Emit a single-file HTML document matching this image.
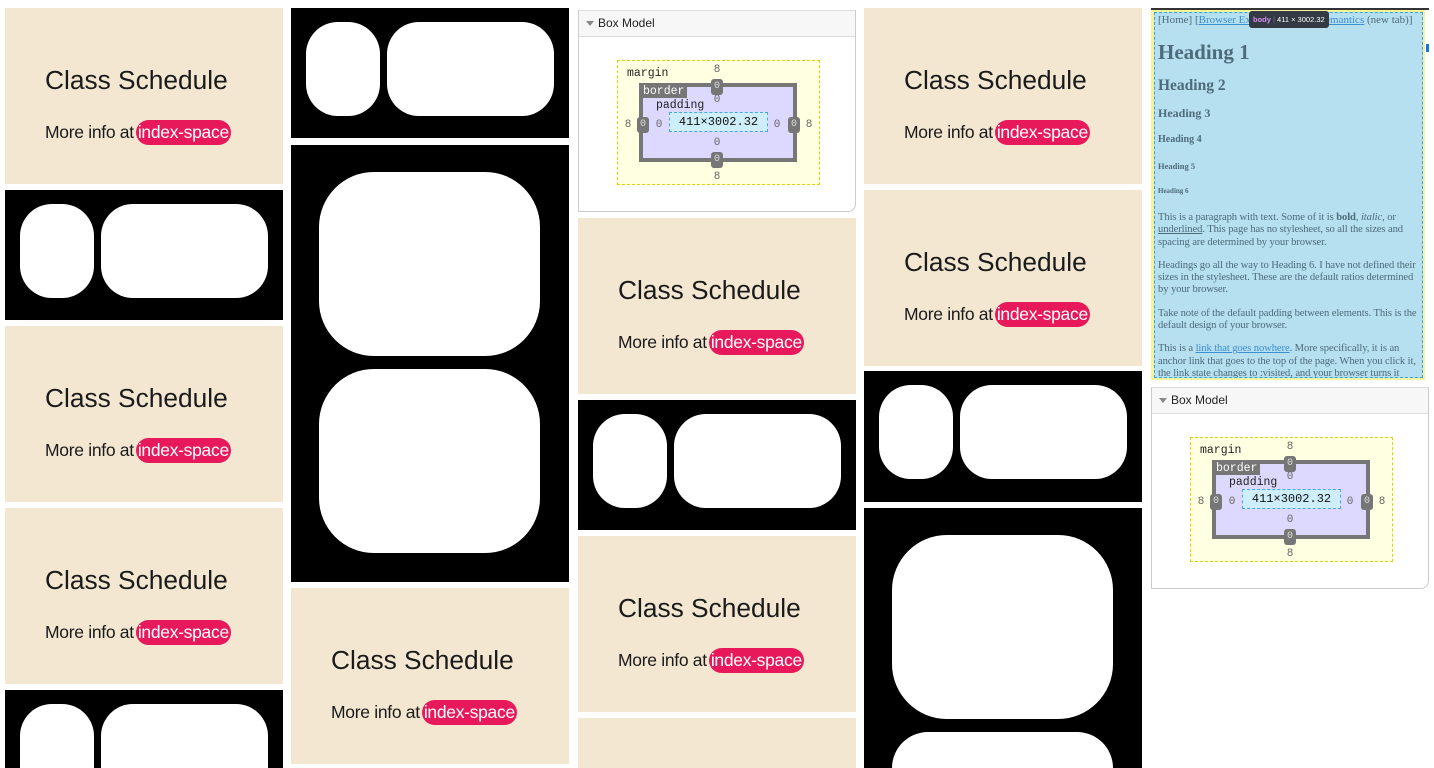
<!DOCTYPE html>
<html><head><meta charset="utf-8"><style>
*{margin:0;padding:0;box-sizing:border-box}
html,body{width:1434px;height:768px;overflow:hidden}
body{background:#fff;position:relative;font-family:"Liberation Sans",sans-serif}
.a{position:absolute}
.card{position:absolute;width:278px;height:176px;background:#f3e7d2;overflow:hidden}
.card .t{position:absolute;left:40px;top:57px;font-size:26.3px;color:#1a1a1a;white-space:nowrap}
.card .m{position:absolute;left:40px;top:112px;font-size:17.5px;color:#1a1a1a;white-space:nowrap;line-height:25px;letter-spacing:-0.3px}
.card .p{display:inline-block;background:#e8195a;color:#fff;border-radius:13px;padding:0 2px;height:25px;line-height:24px;margin-left:2px}
.blk{position:absolute;width:278px;background:#000;overflow:hidden}
.w{position:absolute;background:#fff}
.bm{position:absolute;width:278px;height:202px;background:#fff;border:1px solid #ccc;border-top-color:#ddd;border-radius:0 0 8px 0;overflow:hidden;font-family:"Liberation Mono","DejaVu Sans Mono",monospace}
.bm .h{position:absolute;left:0;top:0;width:100%;height:26px;background:#f7f7f7;border-bottom:1px solid #ddd;font-family:"Liberation Sans",sans-serif;font-size:12px;line-height:25px;padding-left:19px;color:#222}
.bm .h:before{content:"";position:absolute;left:7px;top:10px;border-left:4px solid transparent;border-right:4px solid transparent;border-top:5px solid #888}
.bm .mg{position:absolute;left:38px;top:49px;width:203px;height:125px;background:#ffffe1;border:1px dashed #d8d800}
.bm .bd{position:absolute;left:60px;top:72px;width:158px;height:79px;background:#ddd8fd;border:4px solid #767676}
.bm .ct{position:absolute;left:90px;top:101px;width:99px;height:20px;background:#cdeefa;border:1px dashed #4aa3f0;font-size:12px;text-align:center;line-height:18px;color:#111}
.bm .n{position:absolute;width:20px;margin-left:-10px;text-align:center;font-size:11px;line-height:12px;margin-top:-6px;color:#666}
.bm .b{position:absolute;width:12px;height:16px;margin-left:-6px;margin-top:-8px;background:#767676;border-radius:3px;color:#ddd;font-size:10px;text-align:center;line-height:16px}
.bm .lb{position:absolute;font-size:11.5px;color:#222}
.sc{position:absolute;left:1151px;top:8px;width:278px;height:372px;overflow:hidden;background:#fff}
.sc .in{position:absolute;left:0;top:2px;width:274px;height:370px;background:#f2f39a}
.sc .bl{position:absolute;left:3px;top:4px;width:269px;height:366px;background:#b6dff0;border:1px dashed #3aa0e0;font-family:"Liberation Serif",serif;color:#4e6b7a;padding:1px 0 0 3px;overflow:hidden}
.sc p{font-size:10.6px;line-height:12.3px;margin-bottom:11px;letter-spacing:-0.1px}
.sc a{color:#3c8fd0}
</style></head><body>

<!-- column 1 -->
<div class="card" style="left:5px;top:8px"><div class="t">Class Schedule</div><div class="m">More info at<span class="p">index-space</span></div></div>
<div class="blk" style="left:5px;top:190px;height:130px"><div class="w" style="left:15px;top:14px;width:74px;height:94px;border-radius:32px"></div><div class="w" style="left:96px;top:14px;width:167px;height:94px;border-radius:32px"></div></div>
<div class="card" style="left:5px;top:326px"><div class="t">Class Schedule</div><div class="m">More info at<span class="p">index-space</span></div></div>
<div class="card" style="left:5px;top:508px"><div class="t">Class Schedule</div><div class="m">More info at<span class="p">index-space</span></div></div>
<div class="blk" style="left:5px;top:690px;height:78px"><div class="w" style="left:15px;top:14px;width:74px;height:94px;border-radius:32px"></div><div class="w" style="left:96px;top:14px;width:167px;height:94px;border-radius:32px"></div></div>

<!-- column 2 -->
<div class="blk" style="left:291px;top:8px;height:130px"><div class="w" style="left:15px;top:14px;width:74px;height:94px;border-radius:32px"></div><div class="w" style="left:96px;top:14px;width:167px;height:94px;border-radius:32px"></div></div>
<div class="blk" style="left:291px;top:145px;height:437px"><div class="w" style="left:28px;top:27px;width:221px;height:184px;border-radius:55px"></div><div class="w" style="left:28px;top:224px;width:221px;height:184px;border-radius:55px"></div></div>
<div class="card" style="left:291px;top:588px"><div class="t">Class Schedule</div><div class="m">More info at<span class="p">index-space</span></div></div>

<!-- column 3 -->
<div class="bm" style="left:578px;top:10px">
<div class="h">Box Model</div>
<div class="mg"></div><div class="bd"></div>
<div class="lb" style="left:61px;top:74px;background:#767676;color:#fff;padding:0 3px;line-height:13px">border</div>
<div class="lb" style="left:48px;top:56px">margin</div>
<div class="lb" style="left:77px;top:88px">padding</div>
<div class="ct">411×3002.32</div>
<div class="n" style="left:138px;top:59px">8</div>
<div class="b" style="left:138px;top:76px">0</div>
<div class="n" style="left:138px;top:89px">0</div>
<div class="n" style="left:49px;top:114px">8</div>
<div class="b" style="left:64px;top:114px">0</div>
<div class="n" style="left:80px;top:114px">0</div>
<div class="n" style="left:198px;top:114px">0</div>
<div class="b" style="left:215px;top:114px">0</div>
<div class="n" style="left:230px;top:114px">8</div>
<div class="n" style="left:138px;top:132px">0</div>
<div class="b" style="left:138px;top:149px">0</div>
<div class="n" style="left:138px;top:166px">8</div>
</div>
<div class="card" style="left:578px;top:218px"><div class="t">Class Schedule</div><div class="m">More info at<span class="p">index-space</span></div></div>
<div class="blk" style="left:578px;top:400px;height:130px"><div class="w" style="left:15px;top:14px;width:74px;height:94px;border-radius:32px"></div><div class="w" style="left:96px;top:14px;width:167px;height:94px;border-radius:32px"></div></div>
<div class="card" style="left:578px;top:536px"><div class="t">Class Schedule</div><div class="m">More info at<span class="p">index-space</span></div></div>
<div class="card" style="left:578px;top:718px;height:50px"></div>

<!-- column 4 -->
<div class="card" style="left:864px;top:8px"><div class="t">Class Schedule</div><div class="m">More info at<span class="p">index-space</span></div></div>
<div class="card" style="left:864px;top:190px"><div class="t">Class Schedule</div><div class="m">More info at<span class="p">index-space</span></div></div>
<div class="blk" style="left:864px;top:371px;height:131px"><div class="w" style="left:15px;top:14px;width:74px;height:94px;border-radius:32px"></div><div class="w" style="left:96px;top:14px;width:167px;height:94px;border-radius:32px"></div></div>
<div class="blk" style="left:864px;top:508px;height:260px"><div class="w" style="left:28px;top:27px;width:221px;height:184px;border-radius:55px"></div><div class="w" style="left:28px;top:224px;width:221px;height:36px;border-radius:55px 55px 0 0"></div></div>

<!-- column 5 -->
<div class="sc">
<div class="a" style="left:0;top:0;width:278px;height:2px;background:#333"></div>
<div class="in"></div>
<div class="a" style="left:274px;top:2px;width:4px;height:370px;background:#fff"></div>
<div class="a" style="left:275px;top:36px;width:3px;height:8px;background:#1a73e8"></div>
<div class="bl">
<div style="font-size:11px;line-height:13px;white-space:nowrap">[Home] [<a href="#" style="text-decoration:underline">Browser Exp</a>&nbsp;&nbsp;&nbsp;&nbsp;&nbsp;&nbsp;&nbsp;&nbsp;&nbsp;&nbsp;&nbsp;&nbsp;&nbsp;&nbsp;&nbsp;&nbsp;&nbsp;&nbsp;&nbsp;&nbsp;&nbsp;&nbsp;&nbsp;&nbsp;&nbsp;<a href="#" style="text-decoration:underline">emantics</a> (new tab)]</div>
<div style="font-size:21px;font-weight:bold;margin-top:13px;line-height:24px">Heading 1</div>
<div style="font-size:15.5px;font-weight:bold;margin-top:13px;line-height:18px">Heading 2</div>
<div style="font-size:12px;font-weight:bold;margin-top:11px;line-height:14px">Heading 3</div>
<div style="font-size:10px;font-weight:bold;margin-top:14px;line-height:12px">Heading 4</div>
<div style="font-size:8.5px;font-weight:bold;margin-top:15px;line-height:10px">Heading 5</div>
<div style="font-size:7px;font-weight:bold;margin-top:16px;line-height:8px">Heading 6</div>
<p style="margin-top:17px">This is a paragraph with text. Some of it is <b>bold</b>, <i>italic</i>, or <u>underlined</u>. This page has no stylesheet, so all the sizes and spacing are determined by your browser.</p>
<p>Headings go all the way to Heading 6. I have not defined their sizes in the stylesheet. These are the default ratios determined by your browser.</p>
<p>Take note of the default padding between elements. This is the default design of your browser.</p>
<p>This is a <a href="#" style="text-decoration:underline">link that goes nowhere</a>. More specifically, it is an anchor link that goes to the top of the page. When you click it, the link state changes to :visited, and your browser turns it</p>
</div>
<div class="a" style="left:98px;top:3px;width:80px;height:17px;background:#333a44;border-radius:3px;font-size:7.5px;color:#fff;line-height:17px;padding-left:4px;white-space:nowrap;overflow:hidden"><span style="color:#d58ef0;font-weight:bold">body</span> <span style="color:#777">|</span> 411 × 3002.32</div>
</div>

<div class="bm" style="left:1151px;top:387px">
<div class="h">Box Model</div>
<div class="mg"></div><div class="bd"></div>
<div class="lb" style="left:61px;top:74px;background:#767676;color:#fff;padding:0 3px;line-height:13px">border</div>
<div class="lb" style="left:48px;top:56px">margin</div>
<div class="lb" style="left:77px;top:88px">padding</div>
<div class="ct">411×3002.32</div>
<div class="n" style="left:138px;top:59px">8</div>
<div class="b" style="left:138px;top:76px">0</div>
<div class="n" style="left:138px;top:89px">0</div>
<div class="n" style="left:49px;top:114px">8</div>
<div class="b" style="left:64px;top:114px">0</div>
<div class="n" style="left:80px;top:114px">0</div>
<div class="n" style="left:198px;top:114px">0</div>
<div class="b" style="left:215px;top:114px">0</div>
<div class="n" style="left:230px;top:114px">8</div>
<div class="n" style="left:138px;top:132px">0</div>
<div class="b" style="left:138px;top:149px">0</div>
<div class="n" style="left:138px;top:166px">8</div>
</div>

</body></html>
